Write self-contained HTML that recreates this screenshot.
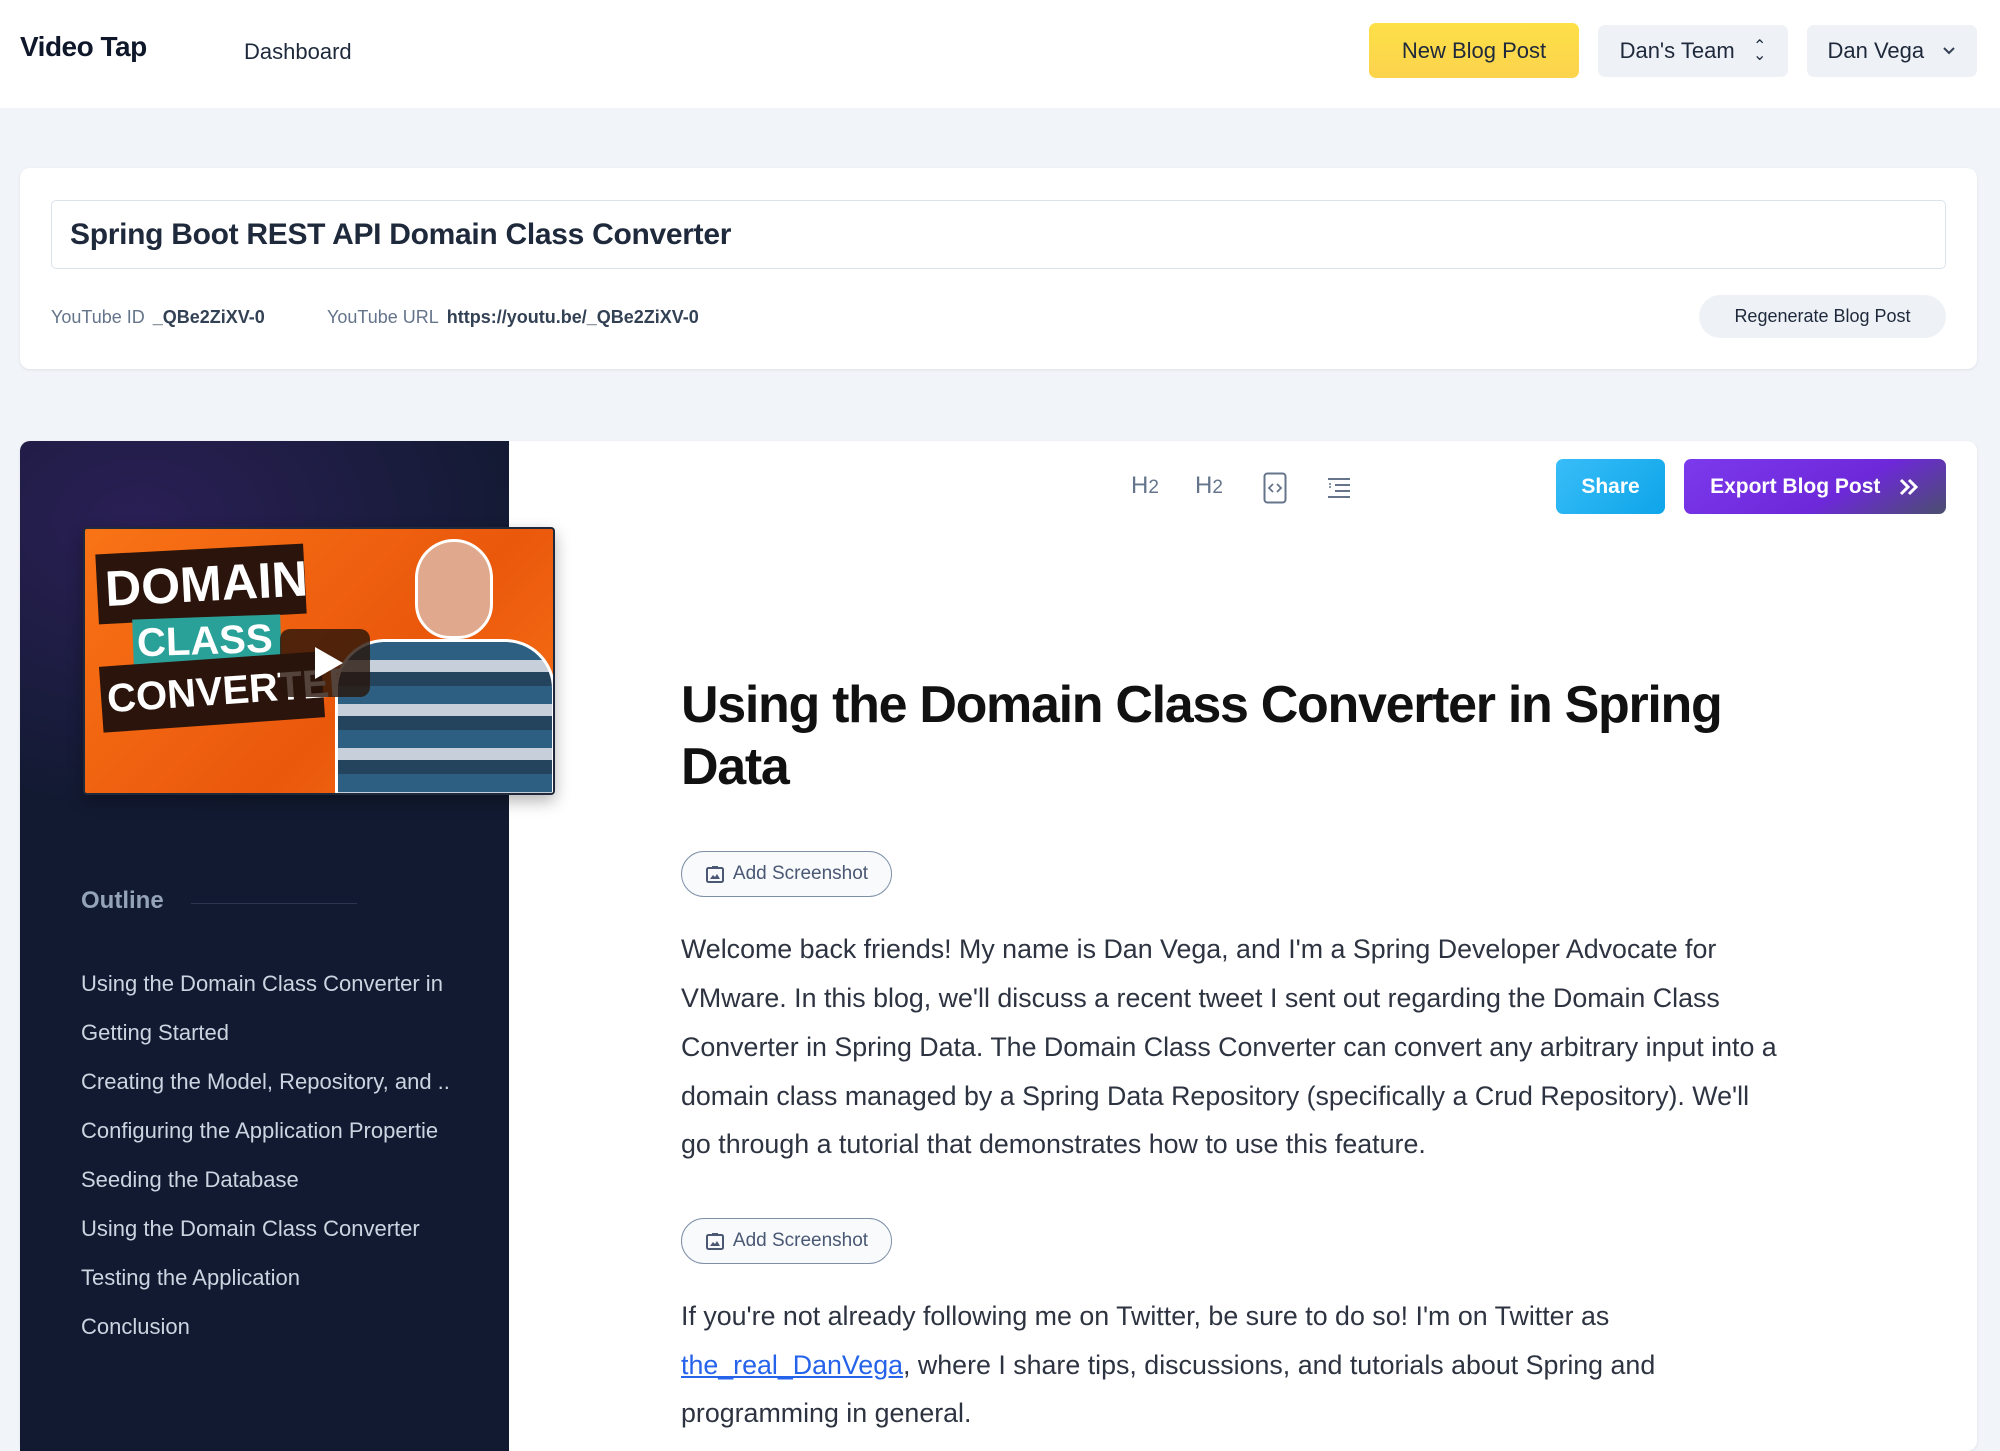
<!DOCTYPE html>
<html><head><meta charset="utf-8"><style>
*{box-sizing:border-box;margin:0;padding:0}
body{width:2000px;height:1443px;overflow:hidden;background:#f1f4f8;font-family:"Liberation Sans",sans-serif;position:relative}
.abs{position:absolute}
header{position:absolute;left:0;top:0;width:2000px;height:108px;background:#fff}
.btn{position:absolute;display:flex;align-items:center;justify-content:center;border-radius:7px;font-size:22px;color:#1e293b}
.card{position:absolute;background:#fff;border-radius:10px;box-shadow:0 1px 3px rgba(0,0,0,.08)}
.meta{position:absolute;top:307px;font-size:18px;color:#64748b}
.meta b{color:#334155;margin-left:8px}
.ol{position:absolute;left:81px;font-size:22px;color:#cbd5e1;white-space:nowrap;width:370px;overflow:hidden}
.p{position:absolute;left:681px;font-size:26.8px;color:#2d3340;white-space:nowrap}
.shot{position:absolute;left:681px;width:211px;height:46px;border:1.5px solid #7f8fa8;border-radius:23px;background:#f8fafc;display:flex;align-items:center;justify-content:center;font-size:19px;color:#4a5874;gap:8px}
.tb{position:absolute;top:472px;font-size:24px;color:#64748b}
</style></head><body>
<header>
<div class="abs" style="left:20px;top:31px;font-size:28px;font-weight:bold;color:#0f172a;letter-spacing:-0.5px">Video Tap</div>
<div class="abs" style="left:244px;top:39px;font-size:22px;color:#1e293b">Dashboard</div>
<div class="btn" style="left:1369px;top:23px;width:210px;height:55px;background:linear-gradient(#fde047,#fcd34d);">New Blog Post</div>
<div class="btn" style="left:1598px;top:25px;width:190px;height:52px;background:#eef1f5;">Dan's Team&nbsp;&nbsp;&nbsp;<span style="font-size:16px;line-height:9px;text-align:center">⌃<br>⌄</span></div>
<div class="btn" style="left:1807px;top:25px;width:170px;height:52px;background:#eef1f5;">Dan Vega&nbsp;&nbsp;&nbsp;<svg width="14" height="10" viewBox="0 0 14 10"><path d="M2 2l5 5 5-5" fill="none" stroke="#334155" stroke-width="2"/></svg></div>
</header>

<div class="card" style="left:20px;top:168px;width:1957px;height:201px"></div>
<div class="abs" style="left:51px;top:200px;width:1895px;height:69px;border:1.5px solid #dde3ec;border-radius:5px;background:#fff"></div>
<div class="abs" style="left:70px;top:218px;font-size:30px;font-weight:bold;color:#1e293b;letter-spacing:-0.3px">Spring Boot REST API Domain Class Converter</div>
<div class="meta" style="left:51px">YouTube ID<b>_QBe2ZiXV-0</b></div>
<div class="meta" style="left:327px">YouTube URL<b>https://youtu.be/_QBe2ZiXV-0</b></div>
<div class="btn" style="left:1699px;top:295px;width:247px;height:43px;border-radius:22px;background:#eef1f5;font-size:18px">Regenerate Blog Post</div>

<div class="card" style="left:20px;top:441px;width:1957px;height:1010px"></div>
<div class="abs" style="left:20px;top:441px;width:489px;height:1010px;border-radius:10px 0 0 0;background:radial-gradient(ellipse 420px 300px at 120px 80px,#2a1f55,rgba(17,24,45,0)),#111a30"></div>

<div class="abs" style="left:83px;top:527px;width:472px;height:268px;border:2px solid #1e293b;border-radius:4px;overflow:hidden;background:linear-gradient(135deg,#f97316,#ea580c 60%,#f97316);box-shadow:0 6px 16px rgba(0,0,0,.3)">
 <div class="abs" style="left:12px;top:20px;width:208px;height:70px;background:#2a140c;transform:rotate(-3deg);color:#fff;font:bold 50px 'Liberation Sans',sans-serif;padding-left:8px;line-height:70px">DOMAIN</div>
 <div class="abs" style="left:48px;top:88px;width:148px;height:48px;background:#2aa198;transform:rotate(-2deg);color:#fff;font:bold 40px 'Liberation Sans',sans-serif;line-height:48px;padding-left:4px">CLASS</div>
 <div class="abs" style="left:16px;top:130px;width:222px;height:66px;background:#2a140c;transform:rotate(-4deg);color:#fff;font:bold 40px 'Liberation Sans',sans-serif;line-height:66px;padding-left:6px">CONVERTER</div>
 <div class="abs" style="left:330px;top:10px;width:78px;height:100px;border-radius:40px 40px 36px 36px;background:#e0a88c;border:3px solid #fff"></div>
 <div class="abs" style="left:250px;top:110px;width:220px;height:170px;border-radius:50px 50px 0 0;background:repeating-linear-gradient(180deg,#2d5f82 0 18px,#c7d0da 18px 30px,#24445e 30px 44px);border:3px solid #fff"></div>
 <div class="abs" style="left:195px;top:100px;width:90px;height:68px;border-radius:10px;background:rgba(40,20,10,.8)"></div>
 <div class="abs" style="left:230px;top:118px;width:0;height:0;border-left:28px solid #fff;border-top:16px solid transparent;border-bottom:16px solid transparent"></div>
</div>

<div class="abs" style="left:81px;top:887px;font-size:24px;font-weight:bold;color:#94a3b8">Outline</div>
<div class="abs" style="left:191px;top:903px;width:166px;height:1px;background:#2b3650"></div>
<div class="ol" style="top:971px">Using the Domain Class Converter in</div>
<div class="ol" style="top:1020px">Getting Started</div>
<div class="ol" style="top:1069px;width:370px">Creating the Model, Repository, and ..</div>
<div class="ol" style="top:1118px">Configuring the Application Propertie</div>
<div class="ol" style="top:1167px">Seeding the Database</div>
<div class="ol" style="top:1216px">Using the Domain Class Converter</div>
<div class="ol" style="top:1265px">Testing the Application</div>
<div class="ol" style="top:1314px">Conclusion</div>

<div class="tb" style="left:1131px">H<span style="font-size:19px">2</span></div>
<div class="tb" style="left:1195px">H<span style="font-size:19px">2</span></div>
<svg class="abs" style="left:1263px;top:472px" width="24" height="32" viewBox="0 0 24 32"><rect x="1.5" y="1.5" width="21" height="29" rx="3" fill="none" stroke="#64748b" stroke-width="2"/><path d="M10 12l-4 4 4 4M14 12l4 4-4 4" fill="none" stroke="#64748b" stroke-width="1.8"/></svg>
<svg class="abs" style="left:1326px;top:476px" width="26" height="24" viewBox="0 0 26 24"><path d="M2 3h22M9 9h15M9 15h15M2 21h22" stroke="#64748b" stroke-width="2"/><path d="M3 8l2 0M3 11l2 0" stroke="#64748b" stroke-width="1.5"/></svg>
<div class="btn" style="left:1556px;top:459px;width:109px;height:55px;background:linear-gradient(135deg,#38bdf8,#0ea5e9);color:#fff;font-weight:bold;font-size:21px">Share</div>
<div class="btn" style="left:1684px;top:459px;width:262px;height:55px;background:linear-gradient(150deg,#7c3aed,#6d28d9 60%,#4b4f6e);color:#fff;font-weight:bold;font-size:21px">Export Blog Post&nbsp;&nbsp;&nbsp;<svg width="22" height="18" viewBox="0 0 22 18"><path d="M3 2l7 7-7 7M11 2l7 7-7 7" fill="none" stroke="#fff" stroke-width="3"/></svg></div>

<div class="abs" style="left:681px;top:674px;font-size:52px;font-weight:bold;color:#111;line-height:62px;letter-spacing:-1.3px">Using the Domain Class Converter in Spring<br>Data</div>

<div class="shot" style="top:851px"><svg width="20" height="20" viewBox="0 0 20 20"><rect x="2" y="4" width="16" height="14" rx="1.5" fill="none" stroke="#4a5874" stroke-width="2"/><path d="M7 3h6" stroke="#4a5874" stroke-width="2"/><path d="M5 15l3-4 2 2 2-3 3 5z" fill="#4a5874"/></svg>Add Screenshot</div>
<div class="p" style="top:934px">Welcome back friends! My name is Dan Vega, and I'm a Spring Developer Advocate for</div>
<div class="p" style="top:983px">VMware. In this blog, we'll discuss a recent tweet I sent out regarding the Domain Class</div>
<div class="p" style="top:1032px">Converter in Spring Data. The Domain Class Converter can convert any arbitrary input into a</div>
<div class="p" style="top:1081px">domain class managed by a Spring Data Repository (specifically a Crud Repository). We'll</div>
<div class="p" style="top:1129px">go through a tutorial that demonstrates how to use this feature.</div>

<div class="shot" style="top:1218px"><svg width="20" height="20" viewBox="0 0 20 20"><rect x="2" y="4" width="16" height="14" rx="1.5" fill="none" stroke="#4a5874" stroke-width="2"/><path d="M7 3h6" stroke="#4a5874" stroke-width="2"/><path d="M5 15l3-4 2 2 2-3 3 5z" fill="#4a5874"/></svg>Add Screenshot</div>
<div class="p" style="top:1301px">If you're not already following me on Twitter, be sure to do so! I'm on Twitter as</div>
<div class="p" style="top:1350px"><span style="color:#2563eb;text-decoration:underline">the_real_DanVega</span>, where I share tips, discussions, and tutorials about Spring and</div>
<div class="p" style="top:1398px">programming in general.</div>
</body></html>
